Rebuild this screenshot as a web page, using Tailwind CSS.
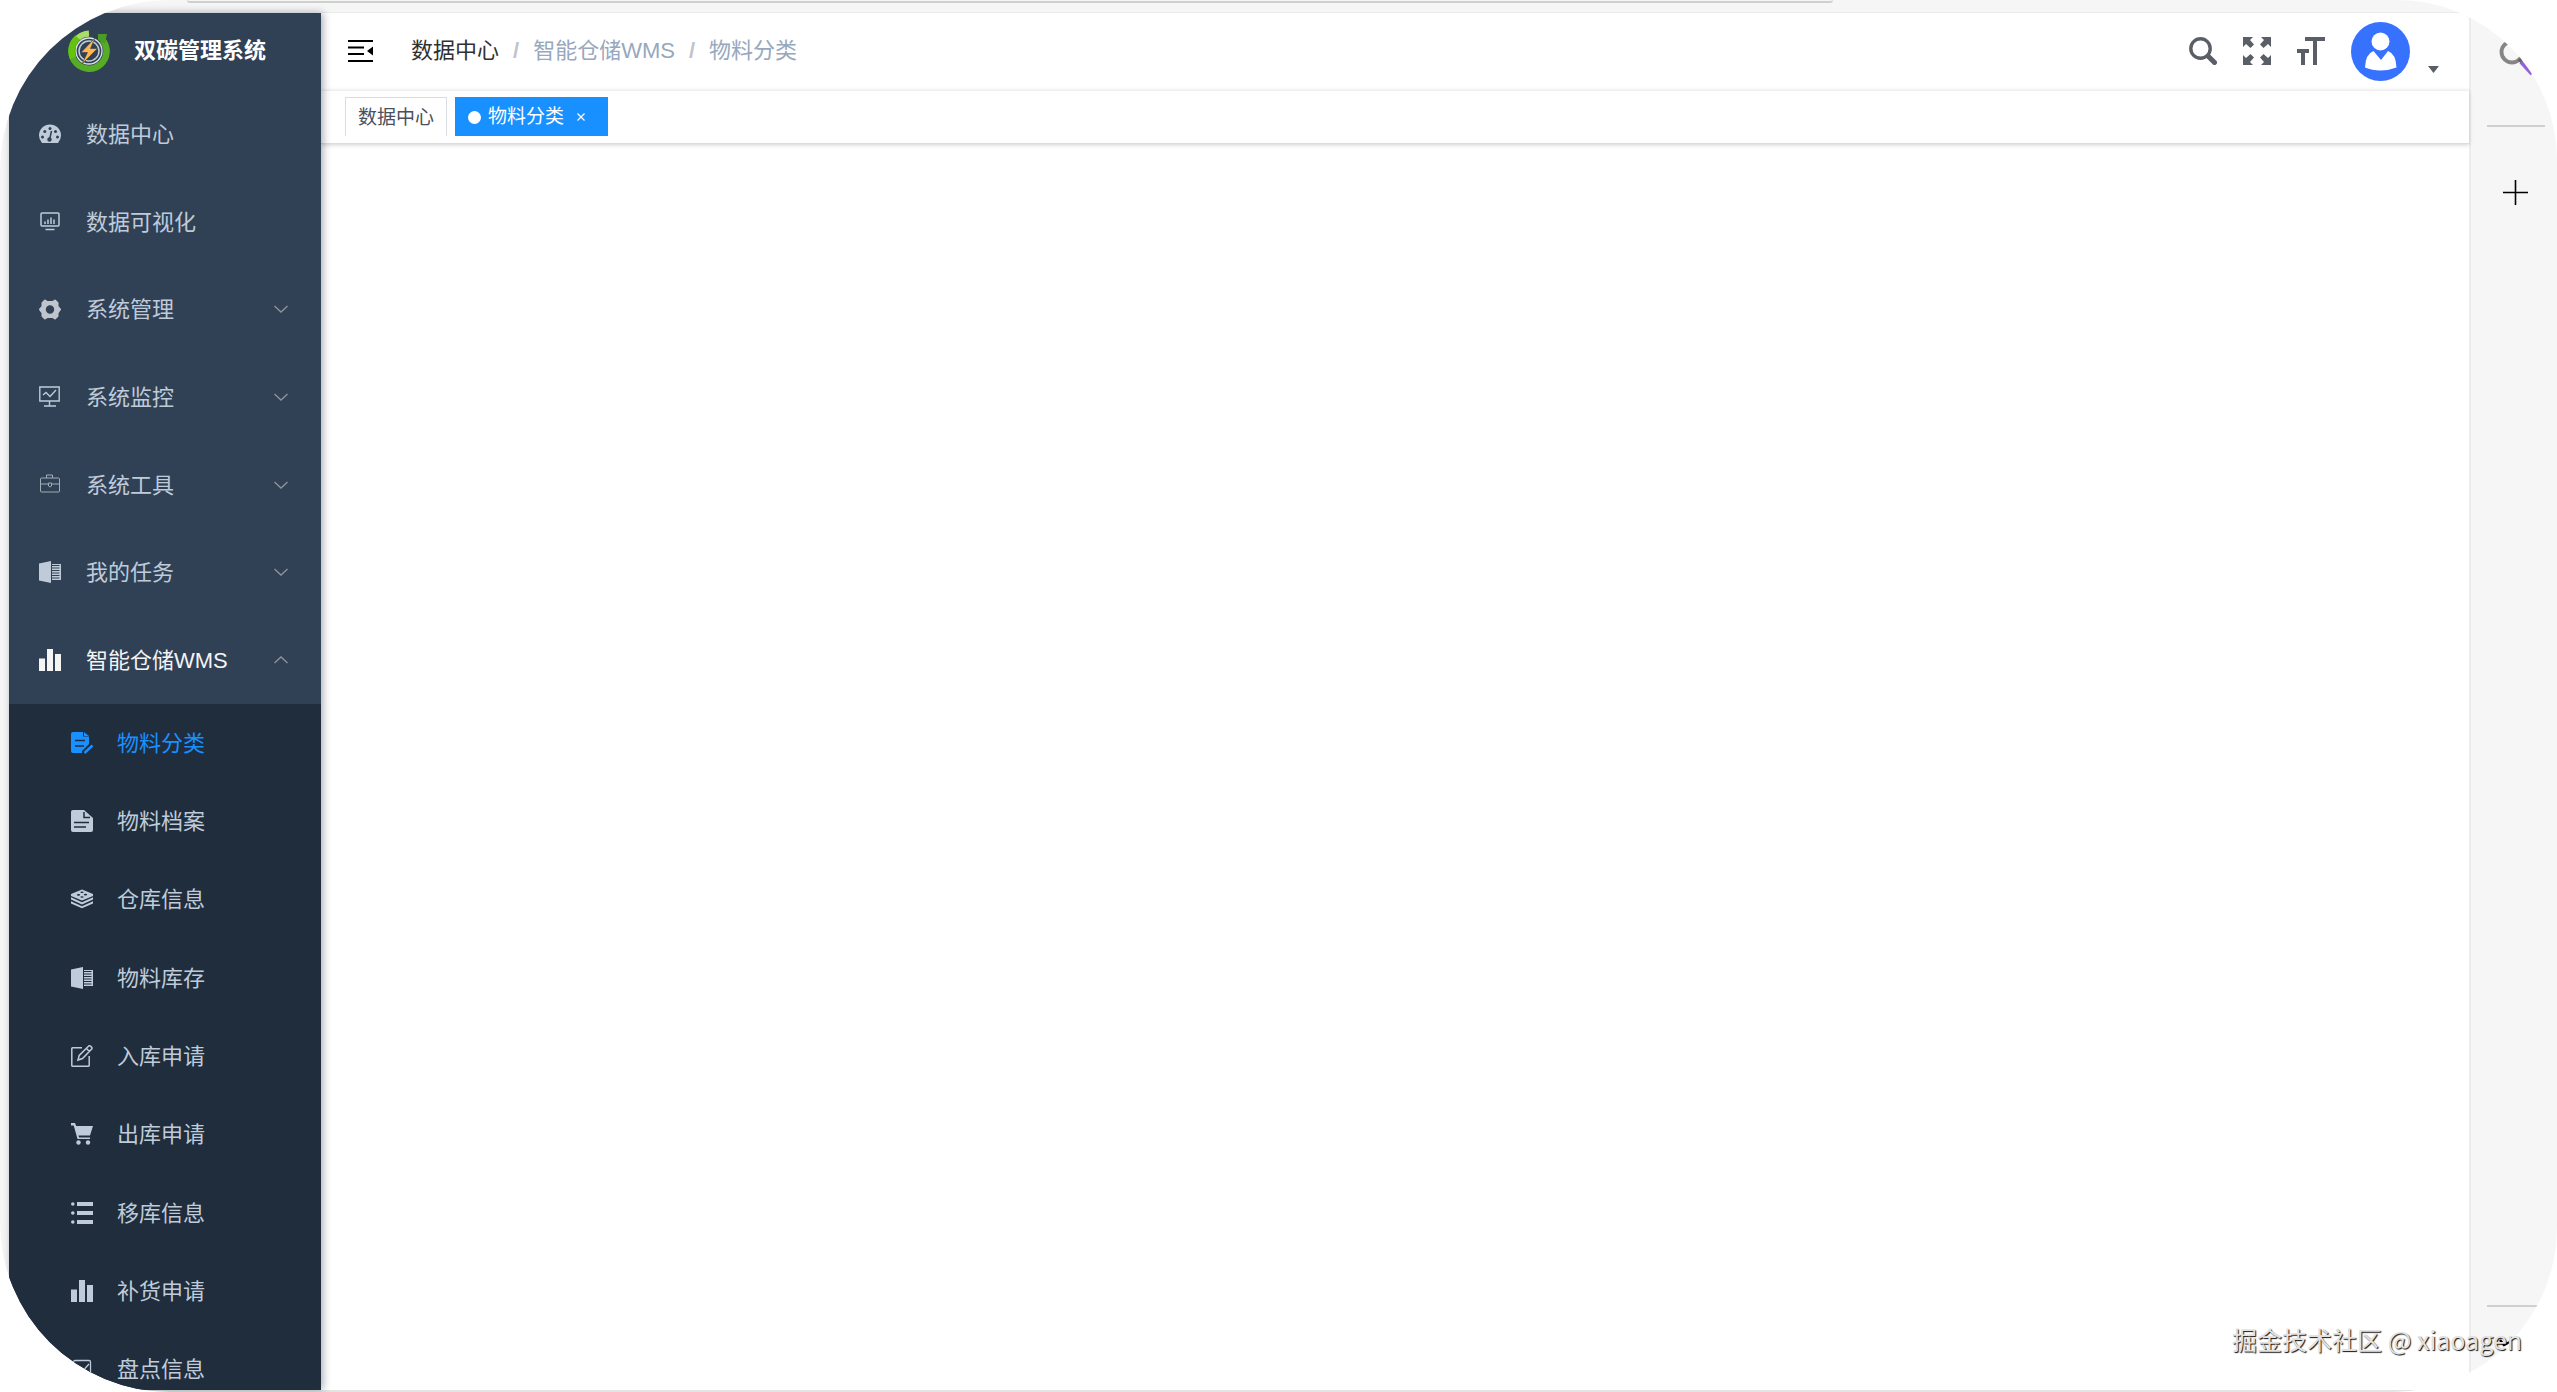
<!DOCTYPE html>
<html lang="zh-CN">
  <head>
    <meta charset="utf-8" />
    <meta name="viewport" content="width=device-width, initial-scale=1.0" />
    <title>双碳管理系统</title>
    <script src="https://cdn.jsdelivr.net/npm/@tailwindcss/browser@4"></script>
  </head>
  <body class="bg-white font-['Liberation_Sans','Noto_Sans_CJK_SC',sans-serif] text-[22px] leading-8">
    <!-- shared icons -->
    <svg class="hidden">
      <symbol id="i-book" viewBox="0 0 22 22">
        <path fill="currentColor" d="M0 2.500 12 0v22L0 19.500zM13 3h9v16h-9v-1.500h7.500v-1H13v-1.500h7.500v-1H13v-1.500h7.500v-1H13v-1.500h7.500v-1H13v-1.500h7.500v-1H13v-1.500h7.500v-1H13z" />
      </symbol>
      <symbol id="i-chart" viewBox="0 0 22 22">
        <path fill="currentColor" d="M0 9.500h6V22H0zM8 0h6v22H8zM16 5h6v17h-6z" />
      </symbol>
      <symbol id="i-down" viewBox="0 0 14 14">
        <path fill="none" stroke="currentColor" stroke-width="1.300" d="M.5 4 7 10l6.500-6" />
      </symbol>
    </svg>

    <div class="relative flex h-screen flex-col overflow-hidden rounded-l-[170px] rounded-tr-[160px] rounded-br-[165px] bg-[#f6f6f6] pl-[9px]">
      <!-- bottom edge of the address bar -->
      <div class="h-3 shrink-0 pr-[724px] pl-[178px]">
        <div class="h-[3px] rounded-b-xl border-b-2 border-[#cdd0cd]"></div>
      </div>

      <div class="flex min-h-0 flex-1">
        <aside class="z-10 mt-px flex w-[312px] shrink-0 flex-col overflow-hidden bg-[#304156] text-[#bfcbd9] shadow-[2px_0_8px_rgba(0,21,41,0.35)]">
          <a href="#" class="flex h-[78px] shrink-0 items-start gap-6 pt-[17px] pl-[59px] font-bold text-white">
            <svg class="size-[42px]" viewBox="0 0 42 42" fill="none">
              <path stroke="#56ad25" stroke-width="6.500" d="M34.500 10A17.500 17.500 0 1 1 8.500 9" />
              <path stroke="#63c30d" stroke-width="6.500" d="M5 28A17.500 17.500 0 0 1 10 7.500" />
              <path stroke="#a9dc69" stroke-width="6" d="M10 8Q14 4 21 3.500" />
              <path fill="#4a9c22" d="M30 4h9l-2 10-7-4z" />
              <circle cx="21" cy="21" r="13" stroke="#dfe5e6" stroke-width="1.300" />
              <circle cx="21" cy="21" r="10" stroke="#c3ccd3" stroke-width="1.500" />
              <path fill="#ffb550" stroke="#304156" stroke-width=".6" d="M27 8 13 22.500h6.500L14 34l15.500-15.500h-7z" />
            </svg>
            <span class="pt-[5px]">双碳管理系统</span>
          </a>

          <nav class="flex flex-col">
            <ul class="grid h-[613px] grid-rows-7">
              <li class="grid">
                <a href="#" class="flex items-center gap-[25px] pr-[33px] pl-[30px]">
                  <svg class="size-[22px]" viewBox="0 0 22 22">
                    <path fill="currentColor" d="M3 19A11 11 0 1 1 19 19z" />
                    <path stroke="#304156" stroke-width="1.500" d="m10.500 16 2-9" />
                    <g fill="#304156">
                      <circle cx="10.500" cy="15.500" r="2.200" /><circle cx="3.500" cy="13" r="1.500" /><circle cx="5.800" cy="7.500" r="1.500" />
                      <circle cx="11" cy="4.500" r="1.500" /><circle cx="16.500" cy="7.500" r="1.500" /><circle cx="18.500" cy="13" r="1.500" />
                    </g>
                  </svg>
                  <span class="pt-px">数据中心</span>
                </a>
              </li>
              <li class="grid">
                <a href="#" class="flex items-center gap-[25px] pr-[33px] pl-[30px]">
                  <svg class="size-[22px]" viewBox="0 0 22 22" fill="none" stroke="currentColor" stroke-width="1.500">
                    <rect x="2" y="2" width="18" height="13" rx="1" />
                    <path d="M6 13v-2.500m3 2.500V8.500m3 4.500V6.500m3 6.500V8.500M6.500 18.500h9" />
                  </svg>
                  <span class="pt-px">数据可视化</span>
                </a>
              </li>
              <li class="grid">
                <button type="button" class="flex items-center gap-[25px] pr-[33px] pl-[30px]">
                  <svg class="size-[22px] text-[#c0c4cc]" viewBox="0 0 22 22">
                    <path fill="currentColor" stroke="currentColor" stroke-width="2" stroke-linejoin="round" fill-rule="evenodd" d="M6 1.500 8.500 3h5L16 1.500 18.500 4v3.500L21 10.500l-2.500 3.500v3L16 19.500 13.500 18h-5L6 19.500 3.500 17v-3L1 10.500l2.500-3V4zM11 5.300a5.200 5.200 0 1 0 0 10.400 5.200 5.200 0 0 0 0-10.400z" />
                  </svg>
                  <span class="pt-px">系统管理</span>
                  <svg class="mb-px ml-auto size-[14px] text-[#909399]"><use href="#i-down" /></svg>
                </button>
              </li>
              <li class="grid">
                <button type="button" class="flex items-center gap-[25px] pr-[33px] pl-[30px]">
                  <svg class="size-[22px]" viewBox="0 0 22 22" fill="none" stroke="currentColor" stroke-width="1.400">
                    <path d="M.8 1h19.400v14H.8zM10.500 15v4.500M5 20h12M4 9 7 6.500l4 4L17 4" />
                  </svg>
                  <span class="pt-px">系统监控</span>
                  <svg class="mb-px ml-auto size-[14px] text-[#909399]"><use href="#i-down" /></svg>
                </button>
              </li>
              <li class="grid">
                <button type="button" class="flex items-center gap-[25px] pr-[33px] pl-[30px]">
                  <svg class="size-[22px] text-[#a3adb8]" viewBox="0 0 22 22" fill="none" stroke="currentColor">
                    <rect x="1.500" y="4" width="19" height="14" rx="1" />
                    <path d="M7.500 4V1h6v3M1.500 10h8m3 0h8M9.500 9h3v3L11 13l-1.500-1z" />
                  </svg>
                  <span class="pt-px">系统工具</span>
                  <svg class="mb-px ml-auto size-[14px] text-[#909399]"><use href="#i-down" /></svg>
                </button>
              </li>
              <li class="grid">
                <button type="button" class="flex items-center gap-[25px] pr-[33px] pl-[30px]">
                  <svg class="mb-px size-[22px]"><use href="#i-book" /></svg>
                  <span class="pt-px">我的任务</span>
                  <svg class="mb-px ml-auto size-[14px] text-[#909399]"><use href="#i-down" /></svg>
                </button>
              </li>
              <li class="grid">
                <button type="button" aria-expanded="true" class="flex items-center gap-[25px] pr-[33px] pl-[30px] text-[#f4f4f5]">
                  <svg class="size-[22px]"><use href="#i-chart" /></svg>
                  <span class="pt-px">智能仓储WMS</span>
                  <svg class="mb-px ml-auto size-[14px] rotate-180 text-[#909399]"><use href="#i-down" /></svg>
                </button>
              </li>
            </ul>

            <ul class="grid h-[705px] grid-rows-9 bg-[#1f2d3d]">
              <li class="grid">
                <a href="#" class="flex items-center gap-6 pl-[62px] text-[#1890ff]">
                  <svg class="mb-px size-[22px]" viewBox="0 0 22 22">
                    <path fill="currentColor" d="M2 0h10v4.500h6V12l-7 7v2H2a2 2 0 0 1-2-2V2a2 2 0 0 1 2-2zM13 0l5 4h-5z" />
                    <path stroke="#1f2d3d" stroke-width="1.500" d="M4 8.500h10M4 14h9" />
                    <path stroke="currentColor" stroke-width="2.500" d="m13.500 21 8-7.500" />
                  </svg>
                  <span class="pt-px">物料分类</span>
                </a>
              </li>
              <li class="grid">
                <a href="#" class="flex items-center gap-6 pl-[62px]">
                  <svg class="mb-px size-[22px]" viewBox="0 0 22 22">
                    <path fill="currentColor" d="M2 0h11l9 8v12a2 2 0 0 1-2 2H2a2 2 0 0 1-2-2V2a2 2 0 0 1 2-2z" />
                    <path stroke="#1f2d3d" stroke-width="1.500" fill="none" d="M13 2v5.500h6M3 12.500h15M3 17h12" />
                  </svg>
                  <span class="pt-px">物料档案</span>
                </a>
              </li>
              <li class="grid">
                <a href="#" class="flex items-center gap-6 pl-[62px]">
                  <svg class="mb-px size-[22px]" viewBox="0 0 22 22">
                    <path fill="currentColor" d="M0 6 11 1.500 22 6v2l-11 4.500L0 8zM0 9.300l11 5 11-5v2.300l-11 5-11-5zM0 13.300l11 5 11-5v2.200l-11 4.700-11-4.700z" />
                    <g fill="#1f2d3d"><ellipse cx="7.500" cy="6.800" rx="1.700" ry=".9" /><ellipse cx="14.500" cy="6.600" rx="1.700" ry=".9" /><ellipse cx="11" cy="4.200" rx="1.700" ry=".8" /><ellipse cx="11" cy="9" rx="1.700" ry=".8" /></g>
                  </svg>
                  <span class="pt-px">仓库信息</span>
                </a>
              </li>
              <li class="grid">
                <a href="#" class="flex items-center gap-6 pl-[62px]">
                  <svg class="mb-px size-[22px]"><use href="#i-book" /></svg>
                  <span class="pt-px">物料库存</span>
                </a>
              </li>
              <li class="grid">
                <a href="#" class="flex items-center gap-6 pl-[62px]">
                  <svg class="mb-px size-[22px]" viewBox="0 0 22 22" fill="none" stroke="currentColor" stroke-width="1.500">
                    <path d="M11 2.800H1.500a.7.700 0 0 0-.7.700v17a.7.700 0 0 0 .7.700h16a.7.700 0 0 0 .7-.7V11M7 15l1.200-4.500 9.500-9.500q1-.6 2 .3l.8.800q.9 1 .2 2L11.500 13.500zM15.500 3.500l3 3" />
                  </svg>
                  <span class="pt-px">入库申请</span>
                </a>
              </li>
              <li class="grid">
                <a href="#" class="flex items-center gap-6 pl-[62px]">
                  <svg class="mb-px size-[22px]" viewBox="0 0 22 22" fill="currentColor">
                    <path d="M0 0h4l1.200 3H22l-3 9.500H7.500l.6 2H19V16H6.500L2.700 2.500H0z" />
                    <circle cx="7.500" cy="19.500" r="2.200" /><circle cx="17" cy="19.500" r="2.200" />
                  </svg>
                  <span class="pt-px">出库申请</span>
                </a>
              </li>
              <li class="grid">
                <a href="#" class="flex items-center gap-6 pl-[62px]">
                  <svg class="mb-px size-[22px]" viewBox="0 0 22 22" fill="currentColor">
                    <path d="M6 0h16v4H6zM6 9h16v4H6zM6 18h16v4H6z" />
                    <circle cx="1.800" cy="2" r="1.800" /><circle cx="1.800" cy="11" r="1.800" /><circle cx="1.800" cy="20" r="1.800" />
                  </svg>
                  <span class="pt-px">移库信息</span>
                </a>
              </li>
              <li class="grid">
                <a href="#" class="flex items-center gap-6 pl-[62px]">
                  <svg class="mb-px size-[22px]"><use href="#i-chart" /></svg>
                  <span class="pt-px">补货申请</span>
                </a>
              </li>
              <li class="grid">
                <a href="#" class="flex items-center gap-6 pl-[62px]">
                  <svg class="mb-px size-[22px]" viewBox="0 0 22 22" fill="none" stroke="currentColor" stroke-width="1.300">
                    <rect x="2.500" y="2.500" width="17" height="17" rx="1.500" />
                    <path d="m6 11 4 4 8-9" />
                  </svg>
                  <span class="pt-px">盘点信息</span>
                </a>
              </li>
            </ul>
          </nav>
        </aside>

        <div class="flex min-w-0 flex-1 flex-col rounded-tr-lg border-t border-r-2 border-t-[#e9ebe9] border-r-[#ececec] bg-white">
          <header class="flex h-[77px] shrink-0 items-center pr-[30px] pb-px pl-[27px]">
            <button type="button" aria-label="折叠菜单">
              <svg class="h-[22px] w-[25px]" viewBox="0 0 25 22">
                <path d="M0 0h25v2H0zM0 6.500h16v2H0zM0 13h16v2H0zM0 20h25v2H0zM25 6.500v9L19 11z" />
              </svg>
            </button>
            <nav class="flex pl-[38px] text-[#97a8be]">
              <a href="#" class="text-[#303133]">数据中心</a>
              <span class="mx-[14px] font-bold text-[#c0c4cc]">/</span>
              <span>智能仓储WMS</span>
              <span class="mx-[14px] font-bold text-[#c0c4cc]">/</span>
              <span>物料分类</span>
            </nav>
            <div class="ml-auto flex items-center gap-[26px] text-[#5a5e66]">
              <button type="button" aria-label="搜索">
                <svg class="size-7" viewBox="0 0 28 28" fill="none" stroke="currentColor">
                  <circle cx="11.500" cy="11.500" r="9.700" stroke-width="3.400" />
                  <path stroke-width="5" stroke-linecap="round" d="m19.500 19.500 6 6" />
                </svg>
              </button>
              <button type="button" aria-label="全屏">
                <svg class="size-7" viewBox="0 0 28 28" fill="currentColor">
                  <path id="corner" d="M0 0h10L7 3l4 4.500L7.500 11 3 7l-3 3z" />
                  <use href="#corner" transform="rotate(90 14 14)" />
                  <use href="#corner" transform="rotate(180 14 14)" />
                  <use href="#corner" transform="rotate(270 14 14)" />
                </svg>
              </button>
              <button type="button" aria-label="布局大小">
                <svg class="size-7" viewBox="0 0 28 28" fill="currentColor">
                  <path d="M8 0h20v4h-8v24h-4V4H8zM0 12h12v4H8v12H4V16H0z" />
                </svg>
              </button>
              <button type="button" aria-label="用户" class="flex items-end gap-[18px]">
                <svg class="size-[59px]" viewBox="0 0 59 59">
                  <circle cx="29.500" cy="29.500" r="29.500" fill="#3772ff" />
                  <g fill="#fff">
                    <circle cx="29.500" cy="19.500" r="9" />
                    <path d="M22.500 29 30 38l7-9q8 3 8.500 16.500Q38 48.500 29.500 48.500T14 45.500Q14.500 32 22.500 29z" />
                  </g>
                </svg>
                <svg class="mb-2 h-[7px] w-[11px]" viewBox="0 0 11 7"><path fill="currentColor" d="M0 0h11L5.500 7z" /></svg>
              </button>
            </div>
          </header>

          <div class="flex h-[54px] shrink-0 gap-2 border-t border-b border-t-[#eeefef] border-b-[#d8dce5] pt-[6px] pl-6 text-[19px] shadow-[0_1px_4px_rgba(0,0,0,0.18)]">
            <a href="#" class="flex h-[39px] items-center border border-b-0 border-[#d8dce5] px-3 pt-px text-[#495060]">数据中心</a>
            <a href="#" class="flex h-[39px] w-[153px] items-center bg-[#1890ff] pt-px pl-[13px] text-white">
              <span class="mr-[7px] size-[13px] rounded-full bg-white"></span>
              物料分类
              <svg class="ml-[13px] size-2" viewBox="0 0 8 8"><path stroke="#fff" stroke-width="1.200" d="m.5.5 7 7m0-7-7 7" /></svg>
            </a>
          </div>

          <main class="flex-1"></main>
        </div>

        <!-- browser side rail -->
        <div class="flex w-[86px] shrink-0 flex-col pl-4">
          <button type="button" aria-label="搜索" class="mt-7 ml-3 self-start">
            <svg class="size-9" viewBox="0 0 36 36" fill="none">
              <circle cx="13" cy="12" r="10.500" stroke="#858585" stroke-width="3.800" />
              <path stroke="#666" stroke-width="3.800" d="m20 19 3 3" />
              <path stroke="#9461d8" stroke-width="4" d="m22 22 11 12" />
            </svg>
          </button>
          <div class="mt-[49px] h-[2px] w-[58px] bg-[#cfcfcf]"></div>
          <button type="button" aria-label="添加" class="mt-[53px] ml-4 self-start">
            <svg class="size-[25px]" viewBox="0 0 25 25"><path stroke="#000" stroke-width="1.600" d="M12.500 0v25M0 12.500h25" /></svg>
          </button>
          <div class="mt-auto h-[2px] w-[58px] bg-[#cfcfcf]"></div>
          <svg class="mt-[29px] mb-[38px] ml-3 h-4 w-6" viewBox="0 0 24 16"><path stroke="#000" stroke-width="2.500" fill="none" d="m1 4 4 5 6-3M4 8h3" /></svg>
        </div>
      </div>
      <div class="-ml-[9px] h-[2px] shrink-0 bg-[#e3e5e3]"></div>
    </div>

    <p class="absolute right-[35px] bottom-[35px] font-['Noto_Sans_CJK_SC',sans-serif] text-[25px] leading-9 text-[#e2e2e2] [text-shadow:1px_1px_1px_#111]">掘金技术社区 @ xiaoagen</p>
  </body>
</html>
